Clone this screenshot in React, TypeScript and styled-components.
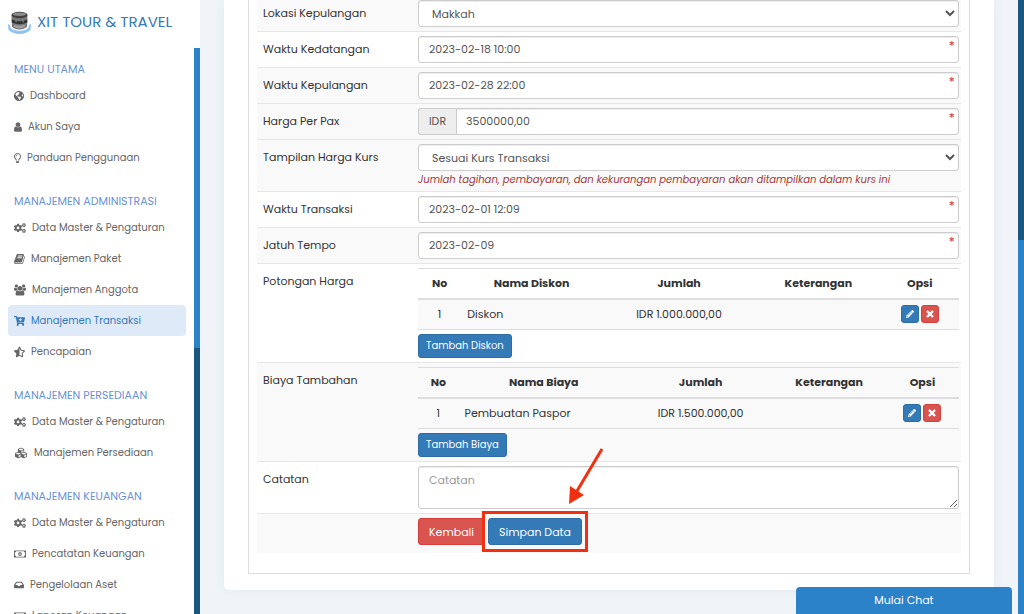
import React from "react";
import styled, { createGlobalStyle } from "styled-components";
import {
  FaCartPlus,
  FaCogs,
  FaCubes,
  FaGlobeAmericas,
  FaInbox,
  FaPencilAlt,
  FaRegLightbulb,
  FaRegMoneyBillAlt,
  FaStarHalfAlt,
} from "react-icons/fa";

const GlobalStyle = createGlobalStyle`
  * { box-sizing: border-box; }
  body {
    margin: 0;
    overflow: hidden;
    background: #f0f4f8;
    color: #333;
    font-family: Poppins, Inter, sans-serif;
    font-size: 11px;
    line-height: 18px;
  }
  button, input, select, textarea { font: inherit; }
`;

/* ---------- shell ---------- */

const Shell = styled.div`
  display: grid;
  grid-template-columns: 200px minmax(0, 1fr) 6px;
  height: 100vh;
  overflow: hidden;
`;

const Sidebar = styled.aside`
  display: flex;
  flex-direction: column;
  min-height: 0;
  background: #fff;
`;

const Brand = styled.a`
  display: flex;
  flex: none;
  align-items: center;
  gap: 6px;
  height: 48px;
  padding: 0 8px 4px;
  color: #337ab7;
  font-size: 15px;
  white-space: nowrap;
  text-decoration: none;
`;

const SidebarBody = styled.div`
  display: flex;
  flex: 1;
  min-height: 0;
`;

const Nav = styled.nav`
  display: flex;
  flex: 1;
  flex-direction: column;
  gap: 18px;
  min-width: 0;
  padding: 11px 8px 0;
  overflow: hidden;
`;

const NavTitle = styled.h2`
  margin: 0;
  padding-left: 6px;
  color: #6a92d4;
  font-size: 11px;
  font-weight: 400;
  line-height: 21px;
`;

const NavList = styled.ul`
  margin: 0;
  padding: 0;
  list-style: none;
`;

const NavLink = styled.a<{ $active?: boolean }>`
  display: flex;
  align-items: center;
  gap: 6px;
  height: 31px;
  padding-left: 6px;
  border-radius: 4px;
  background: ${(p) => (p.$active ? "#dfeaf8" : "transparent")};
  color: ${(p) => (p.$active ? "#337ab7" : "#666")};
  font-size: 10px;
  white-space: nowrap;
  text-decoration: none;
`;

const NavIcon = styled.span<{ $width: number }>`
  display: flex;
  flex: none;
  width: ${(p) => p.$width}px;

  svg {
    width: 100%;
    height: 12px;
  }
`;

const Scrollbar = styled.div<{ $start: string; $size: string }>`
  flex: none;
  width: 6px;
  background: linear-gradient(#2c82c9, #2c82c9) no-repeat 0 ${(p) => p.$start} / 6px ${(p) => p.$size} #1b5680;
`;

/* ---------- content ---------- */

const Main = styled.main`
  min-width: 0;
  padding: 0 24px;
`;

const Card = styled.section`
  padding: 0 24px 16px;
  border-radius: 0 0 5px 5px;
  background: #fff;
  box-shadow: 0 0 12px rgba(40, 60, 90, 0.06);
`;

const Panel = styled.form`
  padding: 0 8px 20px;
  border: 1px solid #ddd;
  border-top: 0;
`;

const FormTable = styled.table`
  width: 100%;
  border-collapse: collapse;
  table-layout: fixed;
`;

const FormRow = styled.tr<{ $shaded?: boolean }>`
  background: ${(p) => (p.$shaded ? "#f9f9f9" : "#fff")};

  > th, > td {
    padding: 4px 2px 4px 6px;
    border-top: 1px solid #e6e6e6;
    vertical-align: top;
  }
  > th {
    width: 159px;
    padding-top: 8px;
    font-weight: 400;
    text-align: left;
  }
  > td { padding-left: 2px; }

  &:first-child > th, &:first-child > td {
    padding-top: 0;
    border-top: 0;
  }
  &:first-child > th { padding-top: 4px; }
  &:last-child > td { padding-bottom: 8px; }
`;

const Field = styled.div`
  position: relative;
  display: flex;
`;

const Required = styled.span`
  position: absolute;
  top: 1px;
  right: 4px;
  color: #dd4b39;
  font-size: 13px;
  font-weight: 500;
`;

const controlBorder = "1px solid #ccc";

const TextInput = styled.input<{ $joined?: boolean }>`
  flex: 1;
  min-width: 0;
  height: 27px;
  padding: 0 20px 0 ${(p) => (p.$joined ? 9 : 10)}px;
  border: ${controlBorder};
  border-radius: ${(p) => (p.$joined ? "0 3px 3px 0" : "3px")};
  background: #fff;
  box-shadow: inset 0 1px 1px rgba(0, 0, 0, 0.075);
  color: #555;
`;

const Addon = styled.span`
  width: 38px;
  border: ${controlBorder};
  border-right: 0;
  border-radius: 3px 0 0 3px;
  background: #eee;
  color: #555;
  line-height: 25px;
  text-align: center;
`;

const Select = styled.select`
  display: block;
  width: 100%;
  height: 27px;
  padding: 0 0 0 9px;
  border: ${controlBorder};
  border-radius: 3px;
  background: #fff;
  box-shadow: inset 0 1px 1px rgba(0, 0, 0, 0.075);
  color: #555;
`;

const TextArea = styled.textarea`
  display: block;
  width: 100%;
  height: 43px;
  padding: 4px 10px;
  border: ${controlBorder};
  border-radius: 3px;
  background: #fff;
  box-shadow: inset 0 1px 1px rgba(0, 0, 0, 0.075);
  resize: vertical;

  &::placeholder { color: #999; }
`;

const Help = styled.p`
  margin: 2px 0 0;
  color: #a23a3a;
  font-size: 10px;
  font-style: italic;
  line-height: 14px;
`;

const DataTable = styled.table`
  width: 100%;
  margin-bottom: 4px;
  border-collapse: collapse;
  table-layout: fixed;

  th, td {
    height: 31px;
    padding: 0 6px;
    border-top: 1px solid #ddd;
    text-align: center;
  }
  thead th {
    height: 30px;
    border-bottom: 2px solid #ddd;
    font-weight: 700;
  }
  tbody td {
    border-bottom: 1px solid #ddd;
    background: #f9f9f9;
  }
  td:nth-child(2) { text-align: left; }
`;

const tones = {
  primary: { fill: "#337ab7", edge: "#2e6da4" },
  danger: { fill: "#d9534f", edge: "#d43f3a" },
};

const Button = styled.button<{ $tone?: keyof typeof tones; $small?: boolean }>`
  height: ${(p) => (p.$small ? 24 : 27)}px;
  padding: 0 ${(p) => (p.$small ? 7 : 10)}px;
  border: 1px solid ${(p) => tones[p.$tone ?? "primary"].edge};
  border-radius: 3px;
  background: ${(p) => tones[p.$tone ?? "primary"].fill};
  color: #fff;
  font-size: ${(p) => (p.$small ? 10 : 11)}px;
  white-space: nowrap;
`;

const IconButton = styled(Button)`
  display: inline-flex;
  align-items: center;
  justify-content: center;
  width: 18px;
  height: 18px;
  padding: 0;
`;

const Options = styled.div`
  display: flex;
  justify-content: center;
  gap: 2px;
`;

const Actions = styled.div`
  display: flex;
  gap: 3px;
`;

/* ---------- call-out over the save button ---------- */

const Callout = styled.div`
  position: relative;
`;

const CalloutFrame = styled.div`
  position: absolute;
  inset: -7px -6px;
  border: 3px solid #f03010;
  pointer-events: none;
`;

const CalloutArrow = styled.svg`
  position: absolute;
  right: -22px;
  bottom: 40px;
  pointer-events: none;
`;

const ChatButton = styled.button`
  position: fixed;
  right: 12px;
  bottom: 0;
  width: 216px;
  height: 27px;
  padding: 0 0 2px;
  border: 0;
  border-radius: 4px 4px 0 0;
  background: #2c82c9;
  color: #fff;
`;

/* ---------- icons ---------- */

const Logo = () => (
  <svg width="23" height="24" viewBox="0 0 23 24" aria-hidden="true">
    <path d="M0 14 L2 15 Q2 19 6 20 Q11.500 21.500 17 20 Q21 19 21 15 L23 14 L22.500 20 Q18 24 11.500 24 Q5 24 0.500 20Z" fill="#8fc4f2" />
    <path d="M3.500 5 L4 17 Q11.500 22 19 17 L19.500 5Z" fill="#777" />
    <path d="M3.700 9.500 Q11.500 13 19.300 9.500 V12.500 Q11.500 16 3.800 12.500Z" fill="#333" />
    <path d="M6 14.500 Q11.500 17 17 14.500 V17 Q11.500 19.500 6 17Z" fill="#a0a0a0" />
    <ellipse cx="11.500" cy="5" rx="8" ry="3.200" fill="#3f3f3f" />
    <ellipse cx="11.500" cy="4.300" rx="6.500" ry="1.700" fill="#8c8c8c" />
    <path d="M8 9.500v3M15 9.500v3" stroke="#888" strokeWidth="1" />
  </svg>
);

const UserIcon = () => (
  <svg viewBox="256 128 1280 1536" fill="currentColor">
    <path d="M1536 1399q0 109-62.500 187t-150.500 78h-854q-88 0-150.500-78t-62.500-187q0-85 8.500-160.500t31.500-152 58.500-131 94-89 134.500-34.500q131 128 313 128t313-128q76 0 134.500 34.500t94 89 58.500 131 31.500 152 8.500 160.500zm-256-887q0 159-112.500 271.500t-271.500 112.500-271.500-112.500-112.500-271.500 112.500-271.500 271.500-112.500 271.500 112.500 112.500 271.500z" />
  </svg>
);

const UsersIcon = () => (
  <svg viewBox="0 0 1920 1792" fill="currentColor">
    <path d="M593 896q-162 5-265 128h-134q-82 0-138-40.500t-56-118.500q0-353 124-353 6 0 43.500 21t97.500 42.500 119 21.500q67 0 133-23-5 37-5 66 0 139 81 256zm1071 637q0 120-73 189.500t-194 69.500h-874q-121 0-194-69.500t-73-189.500q0-53 3.500-103.500t14-109 26.500-108.500 43-97.500 62-81 85.500-53.500 111.500-20q10 0 43 21.500t73 48 107 48 135 21.500 135-21.500 107-48 73-48 43-21.500q61 0 111.500 20t85.500 53.500 62 81 43 97.500 26.500 108.500 14 109 3.500 103.500zm-1024-1277q0 106-75 181t-181 75-181-75-75-181 75-181 181-75 181 75 75 181zm704 384q0 159-112.500 271.500t-271.500 112.500-271.500-112.500-112.500-271.500 112.500-271.500 271.500-112.500 271.500 112.500 112.500 271.500zm576 225q0 78-56 118.500t-138 40.500h-134q-103-123-265-128 81-117 81-256 0-29-5-66 66 23 133 23 59 0 119-21.500t97.500-42.500 43.500-21q124 0 124 353zm-128-609q0 106-75 181t-181 75-181-75-75-181 75-181 181-75 181 75 75 181z" />
  </svg>
);

const BookIcon = () => (
  <svg viewBox="64 128 1664 1536" fill="currentColor">
    <path d="M1703 478q40 57 18 129l-275 906q-19 64-76.500 107.500t-122.500 43.500h-923q-77 0-148.500-53.500t-99.500-131.500q-24-67-2-127 0-4 3-27t4-37q1-8-3-21.500t-3-19.500q2-11 8-21t16.500-23.500 16.500-23.500q23-38 45-91.500t30-91.500q3-10 .5-30t-.5-28q3-11 17-28t17-23q21-36 42-92t25-90q1-9-2.500-32t.5-28q4-13 22-30.500t22-22.500q19-26 42.500-84.500t27.500-96.500q1-8-3-25.500t-2-26.500q2-8 9-18t18-23 17-21q8-12 16.500-30.500t15-35 16-36 19.500-32 26.500-23.500 36-11.500 47.500 5.500l-1 3q38-9 51-9h761q74 0 114 56t18 130l-274 906q-36 119-71.500 153.500t-128.500 34.500h-869q-27 0-38 15-11 16-1 43 24 70 144 70h923q29 0 56-15.500t35-41.500l300-987q7-22 5-57 38 15 59 43zm-1064 2q-4 13 2 22.500t20 9.500h608q13 0 25.500-9.500t16.500-22.500l21-64q4-13-2-22.500t-20-9.500h-608q-13 0-25.500 9.500t-16.500 22.500zm-83 256q-4 13 2 22.500t20 9.500h608q13 0 25.500-9.500t16.500-22.500l21-64q4-13-2-22.500t-20-9.500h-608q-13 0-25.500 9.500t-16.500 22.500z" />
  </svg>
);

const RemoveIcon = () => (
  <svg width="8" height="8" viewBox="0 0 8 8" aria-hidden="true">
    <path d="M1 1 L7 7 M7 1 L1 7" stroke="currentColor" strokeWidth="2.400" />
  </svg>
);

/* ---------- data ---------- */

type NavEntry = { label: string; icon: React.ReactNode; width: number; active?: boolean };

const masterData: NavEntry = { label: "Data Master & Pengaturan", icon: <FaCogs />, width: 12 };

const navigation: { title: string; items: NavEntry[] }[] = [
  {
    title: "MENU UTAMA",
    items: [
      { label: "Dashboard", icon: <FaGlobeAmericas />, width: 10 },
      { label: "Akun Saya", icon: <UserIcon />, width: 8 },
      { label: "Panduan Penggunaan", icon: <FaRegLightbulb />, width: 7 },
    ],
  },
  {
    title: "MANAJEMEN ADMINISTRASI",
    items: [
      masterData,
      { label: "Manajemen Paket", icon: <BookIcon />, width: 11 },
      { label: "Manajemen Anggota", icon: <UsersIcon />, width: 12 },
      { label: "Manajemen Transaksi", icon: <FaCartPlus />, width: 11, active: true },
      { label: "Pencapaian", icon: <FaStarHalfAlt />, width: 11 },
    ],
  },
  {
    title: "MANAJEMEN PERSEDIAAN",
    items: [masterData, { label: "Manajemen Persediaan", icon: <FaCubes />, width: 14 }],
  },
  {
    title: "MANAJEMEN KEUANGAN",
    items: [
      masterData,
      { label: "Pencatatan Keuangan", icon: <FaRegMoneyBillAlt />, width: 12 },
      { label: "Pengelolaan Aset", icon: <FaInbox />, width: 10 },
      { label: "Laporan Keuangan", icon: <FaRegMoneyBillAlt />, width: 12 },
    ],
  },
];

type ItemsProps = { nameHeading: string; name: string; amount: string; columns: string[] };

const ItemsTable = ({ nameHeading, name, amount, columns }: ItemsProps) => (
  <DataTable>
    <colgroup>
      {columns.map((width, i) => (
        <col key={i} style={{ width }} />
      ))}
    </colgroup>
    <thead>
      <tr>
        {["No", nameHeading, "Jumlah", "Keterangan", "Opsi"].map((heading) => (
          <th key={heading} scope="col">{heading}</th>
        ))}
      </tr>
    </thead>
    <tbody>
      <tr>
        <td>1</td>
        <td>{name}</td>
        <td>{amount}</td>
        <td />
        <td>
          <Options>
            <IconButton type="button" aria-label={`Ubah ${name}`}><FaPencilAlt size={8} /></IconButton>
            <IconButton type="button" $tone="danger" aria-label={`Hapus ${name}`}><RemoveIcon /></IconButton>
          </Options>
        </td>
      </tr>
    </tbody>
  </DataTable>
);

type InputRowProps = { id: string; label: string; value: string; shaded?: boolean; prefix?: string };

const InputRow = ({ id, label, value, shaded, prefix }: InputRowProps) => (
  <FormRow $shaded={shaded}>
    <th scope="row"><label htmlFor={id}>{label}</label></th>
    <td>
      <Field>
        {prefix && <Addon>{prefix}</Addon>}
        <TextInput id={id} defaultValue={value} $joined={Boolean(prefix)} required />
        <Required aria-hidden="true">*</Required>
      </Field>
    </td>
  </FormRow>
);

export default function App() {
  return (
    <>
      <GlobalStyle />
      <Shell>
        <Sidebar>
          <Brand href="#"><Logo />XIT TOUR &amp; TRAVEL</Brand>
          <SidebarBody>
            <Nav>
              {navigation.map((group) => (
                <div key={group.title}>
                  <NavTitle>{group.title}</NavTitle>
                  <NavList>
                    {group.items.map((item) => (
                      <li key={item.label}>
                        <NavLink href="#" $active={item.active}>
                          <NavIcon $width={item.width}>{item.icon}</NavIcon>
                          {item.label}
                        </NavLink>
                      </li>
                    ))}
                  </NavList>
                </div>
              ))}
            </Nav>
            <Scrollbar $start="0" $size="53%" />
          </SidebarBody>
        </Sidebar>

        <Main>
          <Card>
            <Panel>
              <FormTable>
                <tbody>
                  <FormRow $shaded>
                    <th scope="row"><label htmlFor="lokasi">Lokasi Kepulangan</label></th>
                    <td><Select id="lokasi"><option>Makkah</option></Select></td>
                  </FormRow>
                  <InputRow id="kedatangan" label="Waktu Kedatangan" value="2023-02-18 10:00" />
                  <InputRow id="kepulangan" label="Waktu Kepulangan" value="2023-02-28 22:00" shaded />
                  <InputRow id="harga" label="Harga Per Pax" value="3500000,00" prefix="IDR" shaded />
                  <FormRow $shaded>
                    <th scope="row"><label htmlFor="kurs">Tampilan Harga Kurs</label></th>
                    <td>
                      <Select id="kurs"><option>Sesuai Kurs Transaksi</option></Select>
                      <Help>Jumlah tagihan, pembayaran, dan kekurangan pembayaran akan ditampilkan dalam kurs ini</Help>
                    </td>
                  </FormRow>
                  <InputRow id="transaksi" label="Waktu Transaksi" value="2023-02-01 12:09" />
                  <InputRow id="tempo" label="Jatuh Tempo" value="2023-02-09" shaded />
                  <FormRow>
                    <th scope="row">Potongan Harga</th>
                    <td>
                      <ItemsTable nameHeading="Nama Diskon" name="Diskon" amount="IDR 1.000.000,00" columns={["8%", "26%", "28.5%", "23%", "14.5%"]} />
                      <Button type="button" $small>Tambah Diskon</Button>
                    </td>
                  </FormRow>
                  <FormRow $shaded>
                    <th scope="row">Biaya Tambahan</th>
                    <td>
                      <ItemsTable nameHeading="Nama Biaya" name="Pembuatan Paspor" amount="IDR 1.500.000,00" columns={["7.5%", "31.5%", "26.5%", "21%", "13.5%"]} />
                      <Button type="button" $small>Tambah Biaya</Button>
                    </td>
                  </FormRow>
                  <FormRow>
                    <th scope="row"><label htmlFor="catatan">Catatan</label></th>
                    <td><TextArea id="catatan" placeholder="Catatan" /></td>
                  </FormRow>
                  <FormRow $shaded>
                    <th />
                    <td>
                      <Actions>
                        <Button type="button" $tone="danger">Kembali</Button>
                        <Callout>
                          <Button type="button">Simpan Data</Button>
                          <CalloutFrame />
                          <CalloutArrow width="36" height="58" viewBox="0 0 36 58" aria-hidden="true">
                            <path d="M34 2 L9 44" stroke="#f03010" strokeWidth="3" />
                            <path d="M1 57 L2 39 L16 48Z" fill="#f03010" />
                          </CalloutArrow>
                        </Callout>
                      </Actions>
                    </td>
                  </FormRow>
                </tbody>
              </FormTable>
            </Panel>
          </Card>
        </Main>

        <Scrollbar $start="240px" $size="100%" />
      </Shell>
      <ChatButton type="button">Mulai Chat</ChatButton>
    </>
  );
}
